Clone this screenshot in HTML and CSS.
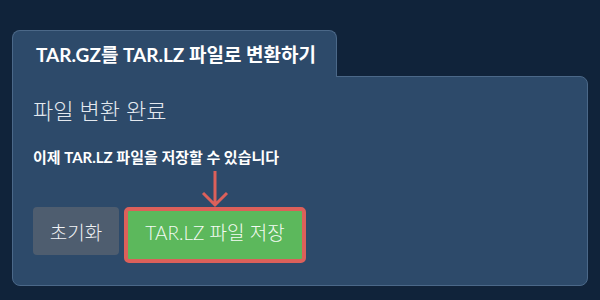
FILE: index.html
```html
<!DOCTYPE html>
<html lang="ko">
<head>
    <meta charset="UTF-8">
    <meta name="viewport" content="width=device-width, initial-scale=1.0">
    <title>TAR.GZ를 TAR.LZ 파일로 변환하기</title>
    <link rel="stylesheet" href="styles.css">
</head>
<body>
    <div class="converter">
        <div class="converter-tab">TAR.GZ를 TAR.LZ 파일로 변환하기</div>
        <div class="converter-panel">
            <h2 class="status-title">파일 변환 완료</h2>
            <p class="status-text">이제 TAR.LZ 파일을 저장할 수 있습니다</p>
            <div class="arrow-row">
                <svg class="arrow" width="28" height="38" viewBox="0 0 28 38">
                    <path d="M14 1 V35 M2 23 L14 35 L26 23" fill="none" stroke="#dc605a" stroke-width="3"/>
                </svg>
            </div>
            <div class="actions">
                <button class="btn-reset">초기화</button>
                <button class="btn-save">TAR.LZ 파일 저장</button>
            </div>
        </div>
    </div>
</body>
</html>
```

FILE: styles.css
```css
body {
    margin: 0;
    background-color: #10233a;
    font-family: Lato, "Noto Sans CJK KR", sans-serif;
    color: #fff;
}

.converter {
    width: 576px;
    margin: 30px 0 0 12px;
}

.converter-tab {
    display: inline-block;
    position: relative;
    height: 47px;
    line-height: 48px;
    padding: 0 0 0 23px;
    margin-bottom: -1px;
    background-color: #2d4a6a;
    border: 1px solid #4b6888;
    border-bottom: 0;
    border-radius: 8px 8px 0 0;
    font-size: 19px;
    font-weight: bold;
    white-space: nowrap;
    box-sizing: border-box;
    width: 325px;
}

.converter-panel {
    background-color: #2d4a6a;
    border: 1px solid #4b6888;
    border-radius: 0 8px 8px 8px;
    padding: 20px 20px 0 20px;
    height: 210px;
    box-sizing: border-box;
}

.status-title {
    margin: 0;
    font-size: 22px;
    font-weight: 300;
    color: #e4e9ef;
    line-height: 28px;
}

.status-text {
    margin: 23px 0 0 0;
    font-size: 15px;
    font-weight: bold;
    line-height: 18px;
}

.arrow-row {
    height: 37px;
    padding-left: 168px;
    margin-top: 4px;
}

.arrow {
    display: block;
}

.actions {
    display: flex;
    align-items: flex-start;
    gap: 5px;
}

.btn-reset {
    width: 86px;
    height: 48px;
    border: 0;
    border-radius: 4px;
    background-color: #4e5d6f;
    color: #f0f2f5;
    font-family: inherit;
    font-size: 19px;
    font-weight: 300;
}

.btn-save {
    width: 182px;
    height: 56px;
    border: 4px solid #dc605a;
    border-radius: 5px;
    background-color: #5cb85c;
    color: #f4fbf4;
    font-family: inherit;
    font-size: 19px;
    font-weight: 300;
    padding: 0 0 8px 0;
}
```
